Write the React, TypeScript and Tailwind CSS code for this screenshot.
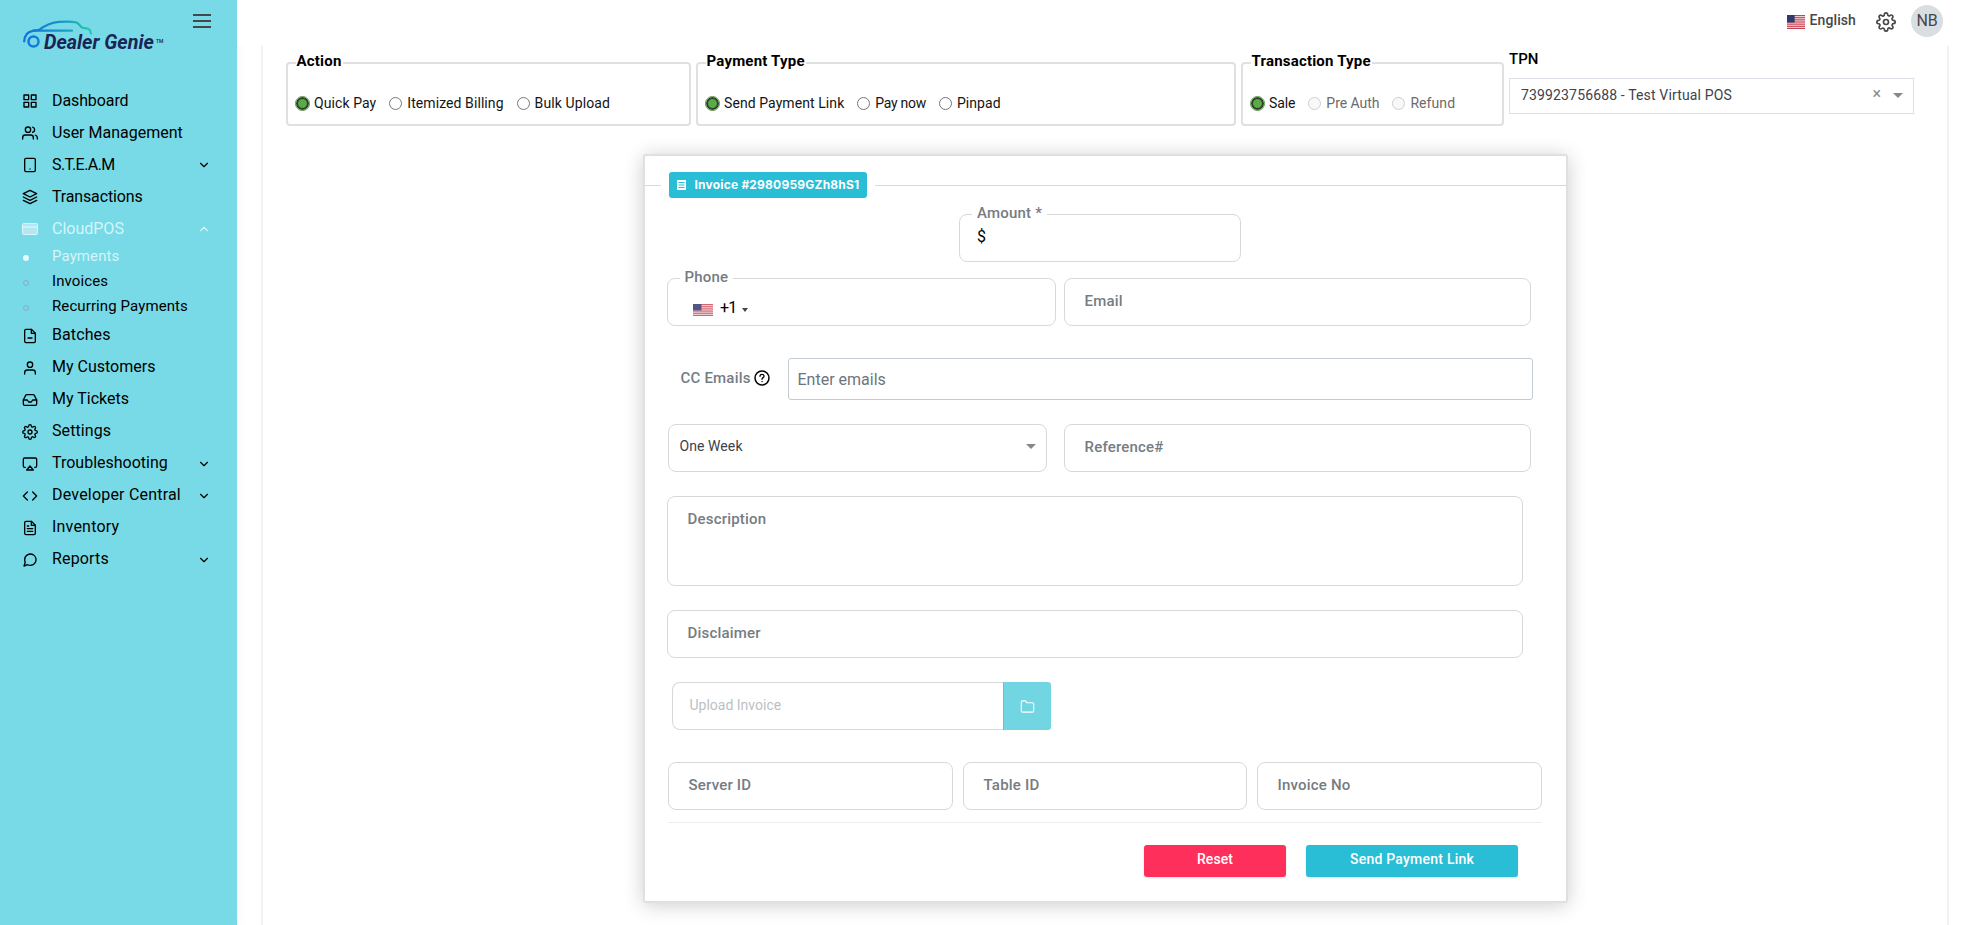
import clsx from "clsx";
import React from "react";
import {
  FiAirplay,
  FiChevronDown,
  FiChevronUp,
  FiCode,
  FiFileMinus,
  FiFileText,
  FiFolder,
  FiGrid,
  FiInbox,
  FiLayers,
  FiMessageCircle,
  FiSettings,
  FiTablet,
  FiUser,
  FiUsers,
} from "react-icons/fi";

interface MenuItem {
  label: string;
  icon: React.ReactNode;
  expand?: "up" | "down";
  active?: boolean;
  tracking?: string;
  children?: { label: string; active?: boolean }[];
}

const CardIcon = () => (
  <svg width="16" height="12" viewBox="0 0 16 12" fill="none">
    <rect x="0.5" y="0.5" width="15" height="11" rx="1.2" fill="#b4e6f4" stroke="#d9f6fb" />
    <path d="M0.5 4h15" stroke="#e4fafd" />
  </svg>
);

const menu: MenuItem[] = [
  { label: "Dashboard", icon: <FiGrid size={16} />, tracking: "tracking-[-0.1px]" },
  { label: "User Management", icon: <FiUsers size={16} /> },
  { label: "S.T.E.A.M", icon: <FiTablet size={16} />, expand: "down", tracking: "tracking-[-0.55px]" },
  { label: "Transactions", icon: <FiLayers size={16} />, tracking: "tracking-[-0.15px]" },
  {
    label: "CloudPOS",
    icon: <CardIcon />,
    expand: "up",
    active: true,
    children: [
      { label: "Payments", active: true },
      { label: "Invoices" },
      { label: "Recurring Payments" },
    ],
  },
  { label: "Batches", icon: <FiFileMinus size={16} />, tracking: "tracking-[0.1px]" },
  { label: "My Customers", icon: <FiUser size={16} /> },
  { label: "My Tickets", icon: <FiInbox size={16} /> },
  { label: "Settings", icon: <FiSettings size={16} />, tracking: "tracking-[0.1px]" },
  { label: "Troubleshooting", icon: <FiAirplay size={16} />, expand: "down" },
  { label: "Developer Central", icon: <FiCode size={16} />, expand: "down", tracking: "tracking-[0.2px]" },
  { label: "Inventory", icon: <FiFileText size={16} />, tracking: "tracking-[0.2px]" },
  { label: "Reports", icon: <FiMessageCircle size={16} />, expand: "down", tracking: "tracking-[0.15px]" },
];

const Logo = () => (
  <div className="relative h-[36px] w-[142px]">
    <svg className="absolute left-0 top-0" width="72" height="28" viewBox="0 0 72 28" fill="none">
      <defs>
        <linearGradient id="car" x1="0" y1="0" x2="70" y2="0" gradientUnits="userSpaceOnUse">
          <stop offset="0" stopColor="#1470dc" />
          <stop offset="0.5" stopColor="#1592cf" />
          <stop offset="1" stopColor="#1fd0a8" />
        </linearGradient>
      </defs>
      <g stroke="url(#car)" strokeWidth="2.2" strokeLinecap="round" strokeLinejoin="round">
        <path d="M1.200 21.500C1.500 15.500 4.500 11.500 10 10.800L16 9.900C22 5.500 28 2.500 36 1.900C43 1.400 49 1.400 53.500 2.500C56 3.200 57.500 7.300 60 7.900C63 8.300 65 7.600 67 10.200L68 13.700" />
        <path d="M10 10.700H49" />
        <circle cx="10.500" cy="21.500" r="5" strokeWidth="2.500" />
      </g>
    </svg>
    <span className="absolute left-[21px] top-[10px] origin-left scale-x-[0.94] whitespace-nowrap text-[21px] leading-[24px] font-bold italic text-[#1a2557]">
      Dealer Genie
    </span>
    <span className="absolute left-[133px] top-[17px] text-[5px] leading-[8px] font-medium text-[#1a2557]">TM</span>
  </div>
);

const Sidebar = () => (
  <aside className="h-full w-[237px] shrink-0 bg-[#78dae6] shadow-[0_0_12px_rgba(0,0,0,0.05)]">
    <div className="flex h-[85px] items-start justify-between pl-[23px] pr-[26px]">
      <div className="pt-5">
        <Logo />
      </div>
      <div className="flex w-[18px] flex-col gap-[4px] pt-[14px]">
        <div className="h-[2px] bg-[#454749]" />
        <div className="h-[2px] bg-[#454749]" />
        <div className="h-[2px] bg-[#454749]" />
      </div>
    </div>
    <nav className="text-black">
      {menu.map((item) => (
        <div key={item.label}>
          <div className={clsx("flex h-8 items-center pl-[22px] pr-[26px]", item.active && "text-[#d4f5fa]")}>
            <span className="w-[30px]">{item.icon}</span>
            <span className={clsx("flex-1 whitespace-nowrap pb-px text-[16px] leading-[30px]", item.tracking)}>
              {item.label}
            </span>
            {item.expand === "down" && <FiChevronDown size={14} />}
            {item.expand === "up" && <FiChevronUp size={14} />}
          </div>
          {item.children && (
            <div className="-mt-px h-[75.600px]">
              {item.children.map((sub) => (
                <div
                  key={sub.label}
                  className={clsx("flex h-[25px] items-center pl-[22px]", sub.active && "text-[#d4f5fa]")}
                >
                  <span className="w-[30px] pl-px pt-[3px]">
                    <span
                      className={clsx(
                        "block size-[6px] rounded-full",
                        sub.active ? "bg-[#e4fafd]" : "border border-[#8fa9c9]"
                      )}
                    />
                  </span>
                  <span className="whitespace-nowrap text-[15px] tracking-[0.1px]">{sub.label}</span>
                </div>
              ))}
            </div>
          )}
        </div>
      ))}
    </nav>
  </aside>
);

const Flag = ({ className }: { className?: string }) => (
  <svg className={className} viewBox="0 0 20 13" preserveAspectRatio="none">
    <rect width="20" height="13" fill="#f0dadd" />
    {[0, 2, 4, 6, 8, 10, 12].map((y) => (
      <rect key={y} y={y} width="20" height="1" fill="#c9404f" />
    ))}
    <rect width="8.500" height="7" fill="#333a6b" />
  </svg>
);

const Header = () => (
  <header className="flex h-[46px] shrink-0 items-start justify-end bg-white pr-[19px] pt-[5px] text-[#454749]">
    <Flag className="mt-[10px] h-[14px] w-[18px]" />
    <span className="ml-[5px] mt-[5px] text-[14px] leading-5 font-medium tracking-[0.1px]">English</span>
    <FiSettings size={20} className="ml-5 mt-[7px]" />
    <span className="ml-[15px] flex size-8 items-center justify-center rounded-full bg-[#d9dee2] text-[16px] leading-8 tracking-[-0.3px]">
      NB
    </span>
  </header>
);

interface RadioOption {
  label: string;
  checked?: boolean;
  disabled?: boolean;
  tracking?: string;
}

const Radio = ({ label, checked, disabled, tracking = "tracking-[0.08px]" }: RadioOption) => (
  <label className="flex items-center gap-[5px]">
    <span
      className={clsx(
        "size-[13px] rounded-full",
        checked && "border-2 border-[#333b33] bg-[#57ac43] outline outline-[0.5px] outline-[#4e9c3d]",
        !checked && !disabled && "border border-[#767676] bg-white",
        disabled && "border border-[#cfcfcf] bg-[#f8f8f8]"
      )}
    />
    <span
      className={clsx(
        "whitespace-nowrap text-[14px] leading-5",
        tracking,
        disabled ? "text-[#6b6b6b]" : "text-[#141414]"
      )}
    >
      {label}
    </span>
  </label>
);

const RadioGroup = ({ title, options, className }: { title: string; options: RadioOption[]; className: string }) => (
  <div className={clsx("relative h-[64px] rounded-[4px] border-2 border-[#e0e0e0]", className)}>
    <span className="absolute -top-[13px] left-[7.500px] whitespace-nowrap bg-white px-px text-[15px] leading-5 font-bold tracking-[0.2px] text-black">
      {title}
    </span>
    <div className="flex gap-[13px] pl-2 pt-[29px]">
      {options.map((o) => (
        <Radio key={o.label} {...o} />
      ))}
    </div>
  </div>
);

const Filters = () => (
  <div className="flex gap-[5.500px] pl-[23px] pt-[16px]">
    <RadioGroup
      title="Action"
      className="w-[404.500px]"
      options={[
        { label: "Quick Pay", checked: true },
        { label: "Itemized Billing" },
        { label: "Bulk Upload", tracking: "tracking-[0.1px]" },
      ]}
    />
    <RadioGroup
      title="Payment Type"
      className="w-[539.500px]"
      options={[
        { label: "Send Payment Link", checked: true },
        { label: "Pay now", tracking: "tracking-[-0.3px]" },
        { label: "Pinpad" },
      ]}
    />
    <RadioGroup
      title="Transaction Type"
      className="w-[262.500px]"
      options={[
        { label: "Sale", checked: true, tracking: "tracking-[-0.1px]" },
        { label: "Pre Auth", disabled: true, tracking: "tracking-[-0.05px]" },
        { label: "Refund", disabled: true },
      ]}
    />
    <div className="-mt-[13px] w-[405px]">
      <div className="h-[29px] text-[15px] leading-5 font-medium text-black">TPN</div>
      <div className="flex h-[36px] items-center border border-[#dcdfe8] bg-white pl-[11px] pr-[10px] text-[#3d424c]">
        <span className="flex-1 pb-[3px] text-[14px] leading-5 tracking-[0.15px]">739923756688 - Test Virtual POS</span>
        <span className="mb-[4px] text-[16px] leading-5 text-[#8a8a8a]">×</span>
        <span className="mb-[2px] ml-3 border-x-[5px] border-t-[5px] border-x-transparent border-t-[#888]" />
      </div>
    </div>
  </div>
);

const labelText = "whitespace-nowrap text-[15px] leading-5 font-medium tracking-[0.2px] text-[#767c83]";

const Field = ({ label, className }: { label: string; className: string }) => (
  <div className={clsx("rounded-[8px] border border-[#d6d8dc] bg-white pl-[19.500px] pt-[12px]", className)}>
    <div className={labelText}>{label}</div>
  </div>
);

const FloatLabel = ({ label, className }: { label: string; className: string }) => (
  <span className={clsx("absolute left-3 bg-white", labelText, className)}>{label}</span>
);

const InvoiceForm = () => (
  <div className="ml-[379.500px] mt-[28px] h-[748.500px] w-[925px] rounded-[3px] border-2 border-[#e0e0e0] bg-white shadow-[0_2px_20px_rgba(0,0,0,0.2)]">
    <div className="flex h-[57px] items-center pt-[1px]">
      <div className="h-px w-4 bg-[#d8dade]" />
      <div className="mx-2 flex h-[26px] w-[198px] items-center rounded-[3px] bg-[#29bed5] pl-2 text-white">
        <svg width="9" height="10" viewBox="0 0 9 10" className="mr-[9px]">
          <rect width="9" height="10" fill="white" />
          <path d="M1.500 2.500h6M1.500 5h6M1.500 7.500h6" stroke="#29bed5" strokeWidth="1" />
        </svg>
        <span className="whitespace-nowrap font-['Inter'] text-[12px] leading-5 font-bold tracking-[0.2px]">
          Invoice #2980959GZh8hS1
        </span>
      </div>
      <div className="h-px flex-1 bg-[#d8dade]" />
    </div>

    <div className="pl-[22.500px]">
      <div className="relative ml-[292px] mt-[1px] h-[48px] w-[282px] rounded-[8px] border border-[#d6d8dc]">
        <FloatLabel label="Amount *" className="-top-[12px] px-[5px]" />
        <span className="absolute left-[17px] top-[10px] text-[16px] leading-6 text-black">$</span>
      </div>

      <div className="mt-[16px] flex gap-[8px]">
        <div className="relative flex h-[48px] w-[389px] items-center rounded-[8px] border border-[#d6d8dc] pl-[25px] pt-[12px]">
          <FloatLabel label="Phone" className="-top-[12px] px-[4.500px]" />
          <Flag className="mt-[3px] h-[12px] w-5 opacity-85" />
          <span className="ml-[7px] -mt-px text-[16px] leading-5 tracking-[-0.9px] text-black">+1</span>
          <span className="ml-[6px] mt-[3px] border-x-[3px] border-t-[4px] border-x-transparent border-t-[#444]" />
        </div>
        <Field label="Email" className="h-[48px] w-[467px]" />
      </div>

      <div className="mt-[32px] flex items-center">
        <span className={clsx("ml-[13.500px] w-[73.500px] -mt-[2px]", labelText)}>CC Emails</span>
        <svg width="16" height="16" viewBox="0 0 16 16" fill="none" stroke="black" strokeLinecap="round" className="-mt-[2px]">
          <circle cx="8" cy="8" r="7" strokeWidth="1.500" />
          <path d="M6 6.300C6 3.800 10 3.800 10 6.200C10 7.700 8 7.600 8 9.200" strokeWidth="1.300" />
          <path d="M8 11.400v.2" strokeWidth="1.400" />
        </svg>
        <div className="ml-[18px] h-[42px] w-[745px] rounded-[3px] border border-[#c5cbd3] pl-[8.500px] pt-px text-[16px] leading-[40px] text-[#6c757d]">
          Enter emails
        </div>
      </div>

      <div className="mt-[24px] flex gap-[17px]">
        <div className="ml-px flex h-[48px] w-[379px] items-center justify-between rounded-[8px] border border-[#d6d8dc] pl-[10.500px] pr-[10px]">
          <span className="pb-[4px] text-[14px] leading-5 tracking-[0.08px] text-[#3d424c]">One Week</span>
          <span className="mb-[3px] border-x-[5px] border-t-[5px] border-x-transparent border-t-[#888]" />
        </div>
        <Field label="Reference#" className="h-[48px] w-[467px]" />
      </div>

      <Field label="Description" className="mt-[24px] h-[90px] w-[856px]" />
      <Field label="Disclaimer" className="mt-[24px] h-[48px] w-[856px]" />

      <div className="ml-[5px] mt-[24px] flex">
        <div className="h-[48px] w-[331px] rounded-l-[8px] border border-r-0 border-[#d6d8dc] pl-[16.500px] pt-[12px] text-[14px] leading-5 text-[#bcbfc3]">
          Upload Invoice
        </div>
        <div className="flex size-[48px] items-center justify-center rounded-r-[3px] border-l border-[#55c9d9] bg-[#71d6e2] text-white">
          <FiFolder size={15} strokeWidth={1.7} />
        </div>
      </div>

      <div className="ml-px mt-[32px] flex gap-[10px]">
        <Field label="Server ID" className="h-[48px] w-[285px]" />
        <Field label="Table ID" className="h-[48px] w-[284px]" />
        <Field label="Invoice No" className="h-[48px] w-[285px]" />
      </div>

      <div className="ml-px mt-[12px] h-px w-[874px] bg-[#ebedf0]" />

      <div className="ml-[477px] mt-[22px] flex gap-5">
        <button className="h-8 w-[142px] rounded-[3px] bg-[#ff2f5b] pb-[4px] text-[14px] leading-5 font-medium tracking-[0.1px] text-white shadow-sm">
          Reset
        </button>
        <button className="h-8 w-[212px] rounded-[3px] bg-[#29bed5] pb-[4px] text-[14px] leading-5 font-medium tracking-[0.23px] text-white shadow-sm">
          Send Payment Link
        </button>
      </div>
    </div>
  </div>
);

const App = () => {
  return (
    <div className="flex h-[925px] w-[1962px] overflow-hidden bg-white font-['Roboto',sans-serif]">
      <Sidebar />
      <div className="flex flex-1 flex-col">
        <Header />
        <main className="ml-6 mr-[13px] flex-1 border-x-2 border-[#f1f2f4] bg-white">
          <Filters />
          <InvoiceForm />
        </main>
      </div>
    </div>
  );
};

export default App;
